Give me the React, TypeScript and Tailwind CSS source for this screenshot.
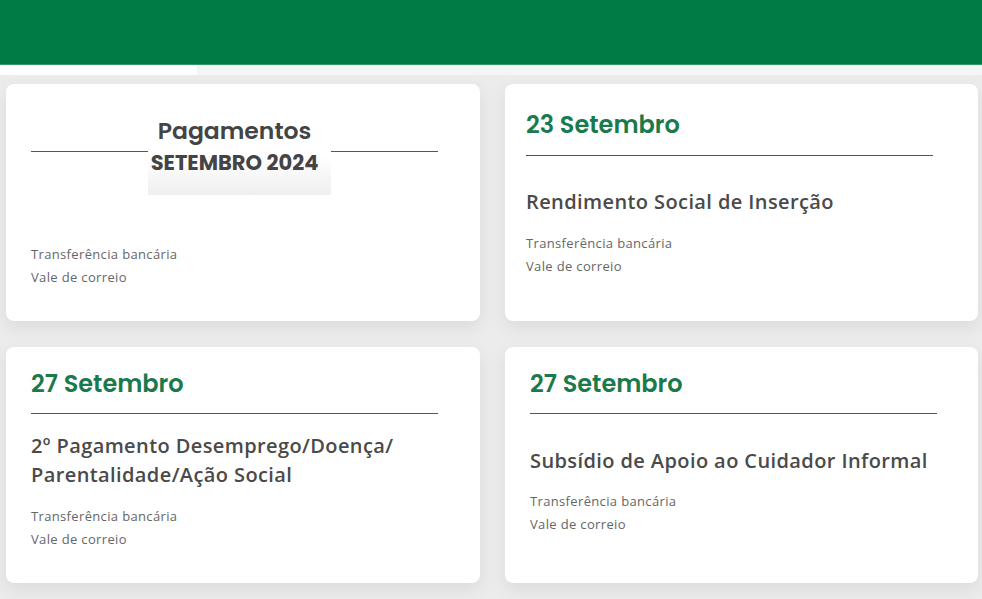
import React from "react";

const heading = "font-['Poppins','Inter',sans-serif] text-[24px] font-semibold leading-[30px] text-[#1b7a4b]";
const title = "font-['Open_Sans',sans-serif] text-[20px] font-semibold leading-[29px] tracking-[0.4px] text-[#4a4a4a]";
const small = "font-['Open_Sans',sans-serif] text-[13px] leading-[23px] tracking-[0.35px] text-[#666]";

function Methods({ className = "" }: { className?: string }) {
  return (
    <div className={`${small} ${className}`}>
      <p>Transferência bancária</p>
      <p>Vale de correio</p>
    </div>
  );
}

function Card({ children, className = "" }: { children: React.ReactNode; className?: string }) {
  return (
    <div className={`h-full rounded-lg bg-white shadow-[0_6px_18px_rgba(0,0,0,0.08)] ${className}`}>
      {children}
    </div>
  );
}

export default function App() {
  return (
    <div className="min-h-[599px] w-[982px] overflow-hidden bg-[#ececec]">
      <header className="h-[65px] border-b border-[#2e9a6c] bg-[#017b46]" />
      <div className="flex h-[10px]">
        <div className="w-[197px] bg-white" />
        <div className="flex-1 bg-[#f5f5f5]" />
      </div>

      <main className="grid grid-cols-[474px_473px] grid-rows-[237px_236px] gap-x-[25px] gap-y-[26px] pl-[6px] pt-[9px]">
        {/* Pagamentos banner */}
        <Card className="pl-[25px] pt-[33px]">
          <div className="flex w-[407px] items-start">
            <div className="mt-[34px] h-px w-[117px] bg-[#1f7352]" />
            <div className="flex h-[78px] w-[183px] flex-col items-center bg-gradient-to-b from-white via-white to-[#efefef] pr-[10px] font-['Poppins','Inter',sans-serif] text-[#444]">
              <span className="text-[23.5px] font-semibold leading-[28px]">Pagamentos</span>
              <span className="mt-[5px] text-[21px] font-bold leading-[26px]">SETEMBRO 2024</span>
            </div>
            <div className="mt-[34px] h-px flex-1 bg-[#1f7352]" />
          </div>
          <Methods className="mt-[48px]" />
        </Card>

        <Card className="pl-[21px] pt-[26px]">
          <h2 className={heading}>23 Setembro</h2>
          <div className="mt-[15px] h-px w-[407px] bg-[#1f7352]" />
          <h3 className={`${title} mt-[31px]`}>Rendimento Social de Inserção</h3>
          <Methods className="mt-[16px] leading-[22px]" />
        </Card>

        <Card className="pl-[25px] pt-[22px]">
          <h2 className={heading}>27 Setembro</h2>
          <div className="mt-[14px] h-px w-[407px] bg-[#1f7352]" />
          <h3 className={`${title} mt-[17px]`}>
            2º Pagamento Desemprego/Doença/
            <br />
            Parentalidade/Ação Social
          </h3>
          <Methods className="mt-[16px]" />
        </Card>

        <Card className="pl-[25px] pt-[22px]">
          <h2 className={heading}>27 Setembro</h2>
          <div className="mt-[14px] h-px w-[407px] bg-[#1f7352]" />
          <h3 className={`${title} mt-[32px]`}>Subsídio de Apoio ao Cuidador Informal</h3>
          <Methods className="mt-[15px]" />
        </Card>
      </main>
    </div>
  );
}
